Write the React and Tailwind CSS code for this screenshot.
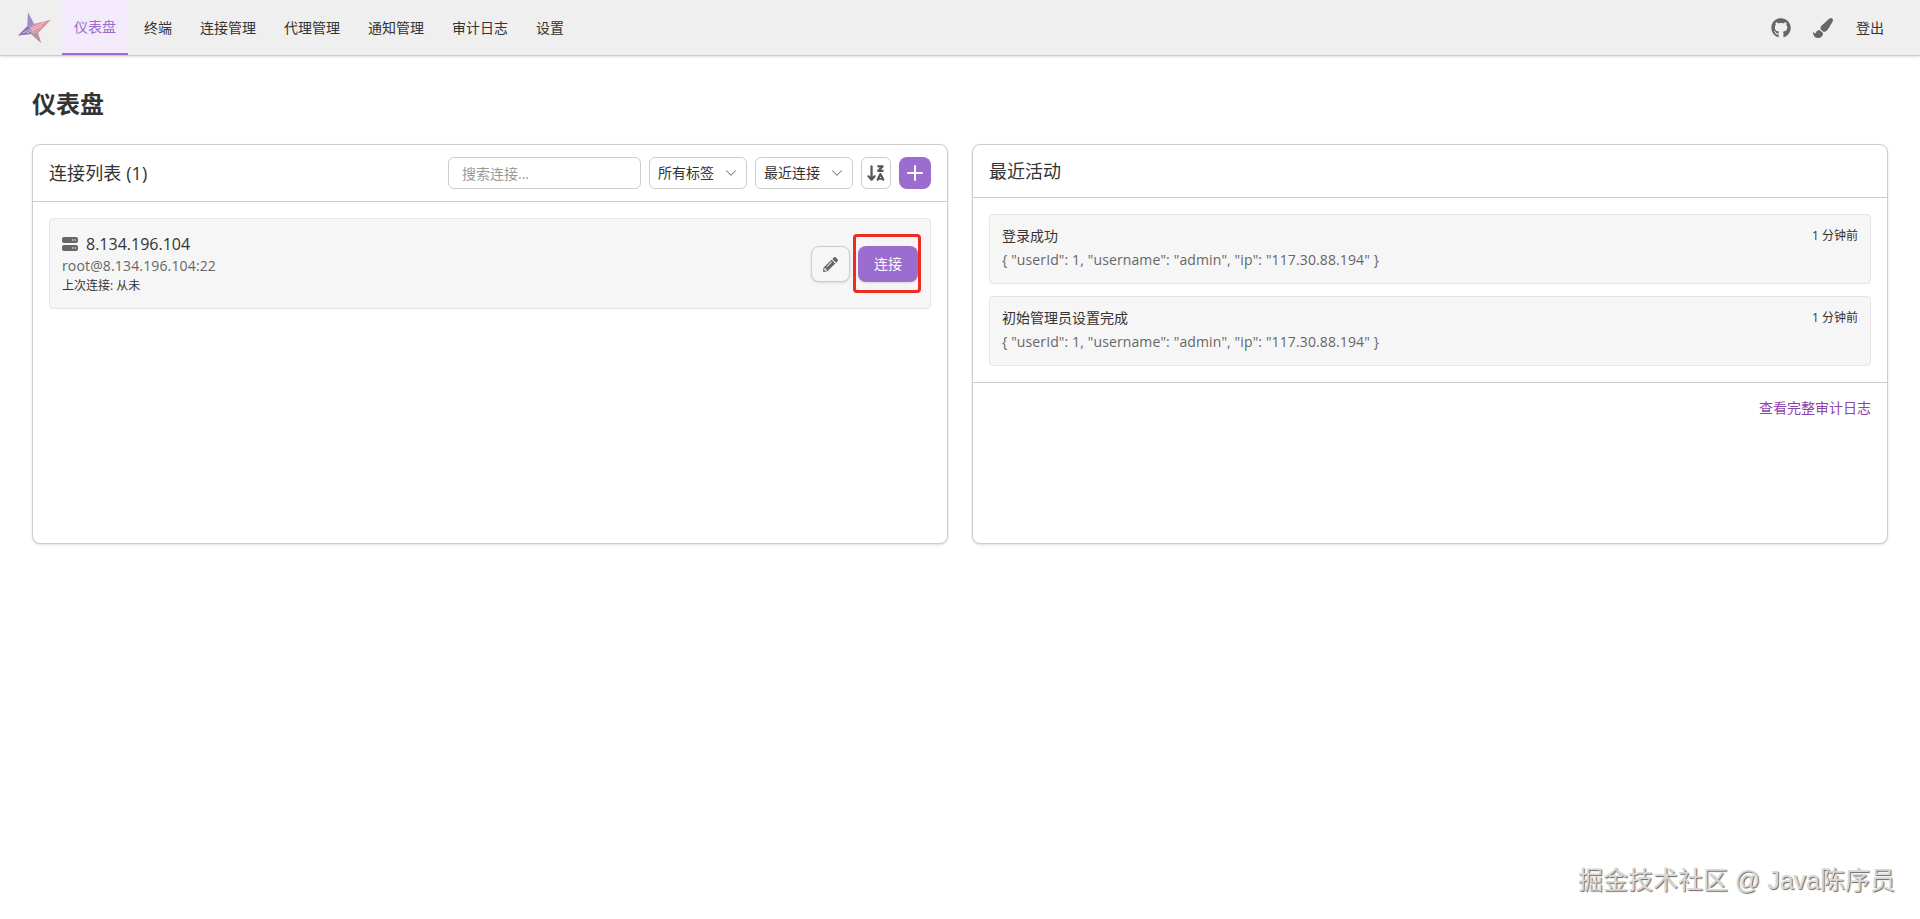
import React from 'react';
import { FaGithub, FaPaintBrush, FaPencilAlt } from 'react-icons/fa';
import { FaServer, FaArrowDownZA } from 'react-icons/fa6';
import { ChevronDown, Plus } from 'lucide-react';

const navItems = ['仪表盘', '终端', '连接管理', '代理管理', '通知管理', '审计日志', '设置'];

const activities = [
    { title: '登录成功', time: '1 分钟前' },
    { title: '初始管理员设置完成', time: '1 分钟前' }
];

const detail = '{ "userId": 1, "username": "admin", "ip": "117.30.88.194" }';

function Logo() {
    return (
        <svg viewBox="0 0 34 32" className="w-[34px] h-[32px] shrink-0">
            <polygon points="10,0.5 16,12 32.5,8 20,21 23,31 13,22 0,23.5 9.5,14" fill="#c4a3c6" />
            <polygon points="10,0.5 16,12 12,15 9.5,14" fill="#9a8ec8" />
            <polygon points="16,12 32.5,8 20,21 14,18" fill="#e0929f" />
            <polygon points="0,23.5 9.5,14 14,18 13,22" fill="#8d78b0" />
            <polygon points="13,22 20,21 23,31" fill="#b9919f" />
            <path d="M5 21 L27 10 M9 21 L24 14" stroke="#f3e3ea" strokeWidth="0.7" />
        </svg>
    );
}

function SelectBox({ label }) {
    return (
        <div className="relative w-[98px]">
            <select className="w-full h-8 appearance-none rounded-md border border-[#ccc] bg-white pl-2 pr-6 text-sm text-[#333] outline-none">
                <option>{label}</option>
            </select>
            <ChevronDown className="absolute right-[7px] top-[7px] w-[18px] h-[18px] text-[#777]" strokeWidth={1.4} />
        </div>
    );
}

function ConnectionCard() {
    return (
        <div className="h-[400px] rounded-lg border border-[#ccc] bg-white shadow-sm">
            <div className="flex items-center justify-between border-b border-[#ccc] px-4 py-3">
                <h2 className="text-lg text-[#333] tracking-[0.1px]">连接列表 (1)</h2>
                <div className="flex items-center gap-2">
                    <input
                        type="text"
                        placeholder="搜索连接..."
                        className="w-[193px] h-8 rounded-md border border-[#ccc] bg-white px-[13px] text-sm text-[#333] placeholder:text-[#999] outline-none"
                    />
                    <SelectBox label="所有标签" />
                    <SelectBox label="最近连接" />
                    <button className="flex w-[30px] h-8 items-center justify-center rounded-md border border-[#ccc] bg-white text-[#555]">
                        <FaArrowDownZA className="w-5 h-5" />
                    </button>
                    <button className="flex w-8 h-8 items-center justify-center rounded-lg bg-[#9d6ccf] text-white">
                        <Plus className="w-6 h-6" strokeWidth={2} />
                    </button>
                </div>
            </div>
            <div className="p-4">
                <div className="flex items-center justify-between rounded border border-[#e5e5e5] bg-[#f6f6f6] pl-3 pr-3 h-[91px]">
                    <div className="-mt-px">
                        <div className="flex items-center gap-2 text-base leading-6 text-[#333]">
                            <FaServer className="w-4 h-4 text-[#666]" />
                            <span>8.134.196.104</span>
                        </div>
                        <div className="text-sm leading-5 text-[#666] tracking-[0.15px]">root@8.134.196.104:22</div>
                        <div className="text-xs leading-4 text-[#333] mt-[2px]">上次连接: 从未</div>
                    </div>
                    <div className="flex items-center gap-2 mt-px">
                        <button className="flex w-[39px] h-9 items-center justify-center rounded-lg border border-[#ccc] bg-[#f6f6f6] text-[#666] shadow-sm">
                            <FaPencilAlt className="w-[15px] h-[15px]" />
                        </button>
                        <div className="relative">
                            <button className="block w-[60px] h-9 rounded-lg bg-[#9d6ccf] text-sm text-white shadow-sm">连接</button>
                            <div className="absolute -left-[5px] -right-[3px] -top-[12px] -bottom-[11px] rounded-sm border-[3px] border-[#ee2c1f]" />
                        </div>
                    </div>
                </div>
            </div>
        </div>
    );
}

function ActivityCard() {
    return (
        <div className="h-[400px] rounded-lg border border-[#ccc] bg-white shadow-sm">
            <div className="border-b border-[#ccc] px-4 py-3">
                <h2 className="text-lg leading-7 text-[#333]">最近活动</h2>
            </div>
            <div className="flex flex-col gap-3 border-b border-[#ccc] p-4">
                {activities.map((item) => (
                    <div key={item.title} className="h-[70px] rounded border border-[#e5e5e5] bg-[#f6f6f6] px-3 pt-[11px]">
                        <div className="flex items-center justify-between">
                            <span className="text-sm leading-5 text-[#333]">{item.title}</span>
                            <span className="text-xs leading-4 text-[#333] -mt-px">{item.time}</span>
                        </div>
                        <div className="mt-1 text-sm leading-5 text-[#666] tracking-[0.12px]">{detail}</div>
                    </div>
                ))}
            </div>
            <div className="px-4 pt-3 text-right">
                <a href="#" className="text-sm leading-5 text-[#8e44ad]">查看完整审计日志</a>
            </div>
        </div>
    );
}

export default function App() {
    return (
        <div className="relative min-h-[919px] bg-white text-[#333] font-['Open_Sans','Noto_Sans_CJK_SC',sans-serif]">
            <nav className="flex h-[56px] items-center justify-between border-b border-[#ccc] bg-[#efefef] pl-[18px] pr-4 shadow-sm">
                <div className="flex h-full items-center">
                    <Logo />
                    <div className="ml-[10px] flex h-full gap-1">
                        {navItems.map((name, i) => (
                            <a
                                key={name}
                                href="#"
                                className={i === 0
                                    ? 'flex items-center border-b-2 border-[#9d6ccf] bg-[#f3ebfc] px-3 text-sm text-[#9d6ccf]'
                                    : 'flex items-center px-3 text-sm text-[#333]'}
                            >
                                {name}
                            </a>
                        ))}
                    </div>
                </div>
                <div className="flex items-center">
                    <FaGithub className="w-5 h-5 text-[#666]" />
                    <FaPaintBrush className="ml-[22px] w-5 h-5 text-[#666]" />
                    <a href="#" className="ml-[23px] mr-5 text-sm text-[#333]">登出</a>
                </div>
            </nav>
            <main className="px-8 pt-8">
                <h1 className="mb-6 text-2xl font-bold text-[#333]">仪表盘</h1>
                <div className="grid grid-cols-2 gap-6">
                    <ConnectionCard />
                    <ActivityCard />
                </div>
            </main>
            <div className="absolute right-[25px] bottom-[20px] text-[25px] text-[#d8d8d8] [text-shadow:1px_1px_1px_#666] font-['Liberation_Sans','Noto_Sans_CJK_SC',sans-serif]">
                掘金技术社区 @ Java陈序员
            </div>
        </div>
    );
}
